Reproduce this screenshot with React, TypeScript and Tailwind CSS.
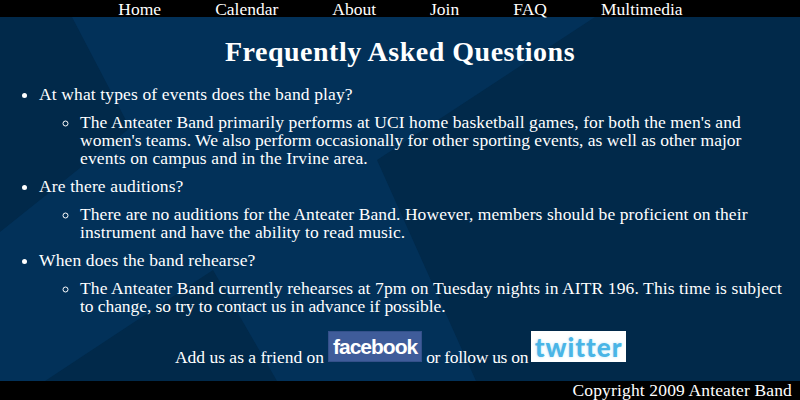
const navItems = ['Home', 'Calendar', 'About', 'Join', 'FAQ', 'Multimedia'];

const faqs = [
  {
    q: 'At what types of events does the band play?',
    a: [
      { text: "The Anteater Band primarily performs at UCI home basketball games, for both the men's and", cls: 'tracking-[0.09px]' },
      { text: "women's teams. We also perform occasionally for other sporting events, as well as other major", cls: 'tracking-[0px]' },
      { text: 'events on campus and in the Irvine area.', cls: 'tracking-[0.15px]' },
    ],
  },
  {
    q: 'Are there auditions?',
    a: [
      { text: 'There are no auditions for the Anteater Band. However, members should be proficient on their', cls: 'tracking-[0.08px]' },
      { text: 'instrument and have the ability to read music.', cls: 'tracking-[0.12px]' },
    ],
  },
  {
    q: 'When does the band rehearse?',
    a: [
      { text: 'The Anteater Band currently rehearses at 7pm on Tuesday nights in AITR 196. This time is subject', cls: 'tracking-[0.11px]' },
      { text: 'to change, so try to contact us in advance if possible.', cls: 'tracking-[-0.07px]' },
    ],
  },
];

const App = () => {
  return (
    <div className="relative flex h-[400px] w-[800px] flex-col overflow-hidden bg-[#01294a] font-['Liberation_Serif',serif] text-[17.5px] leading-[18px] text-white">
      {/* star behind the content */}
      <svg className="absolute left-0 top-0" width="800" height="400" viewBox="0 0 800 400">
        <polygon points="72,17 595,17 377,160 476,381 277,381 213,270 45,381 0,381 0,232 130,128" fill="#023159" />
      </svg>

      <nav className="relative flex h-[17px] items-center justify-center gap-[54px] bg-black pl-[1px]">
        {navItems.map((item) => (
          <a key={item} href="#">{item}</a>
        ))}
      </nav>

      <main className="relative flex-1">
        <h1 className="mt-[21px] text-center text-[28px] font-bold leading-[27px] tracking-[0.5px]">Frequently Asked Questions</h1>

        <ul className="mt-[20px] list-disc pl-[39px] tracking-[0.13px]">
          {faqs.map((faq) => (
            <li key={faq.q} className="mb-[10px]">
              {faq.q}
              <ul className="mt-[10px] list-[circle] pl-[41px]">
                <li>
                  {faq.a.map((line) => (
                    <div key={line.text} className={`whitespace-nowrap ${line.cls}`}>{line.text}</div>
                  ))}
                </li>
              </ul>
            </li>
          ))}
        </ul>

        <p className="mt-[16px] flex items-end justify-center whitespace-nowrap pl-[1px]">
          <span>Add us as a friend on</span>
          <span className="mx-[4px] mb-[4px] flex h-[31px] w-[94px] items-center justify-center border border-[#34508a] bg-[#3f5c9a] font-['Liberation_Sans',sans-serif] text-[21px] font-bold tracking-[-1px] text-white">facebook</span>
          <span className="tracking-[-0.3px]">or follow us on</span>
          <span className="mb-[4px] ml-[3px] flex h-[31px] w-[95px] items-center justify-center bg-white font-['Lato',sans-serif] text-[26px] font-black tracking-[1px] text-[#4ab5e6] [text-shadow:0_0_3px_#bfe6f7]">twitter</span>
        </p>
      </main>

      <footer className="relative h-[19px] bg-black pr-[8px] text-right leading-[19px] tracking-[0.15px]">Copyright 2009 Anteater Band</footer>
    </div>
  );
};

export default App;
